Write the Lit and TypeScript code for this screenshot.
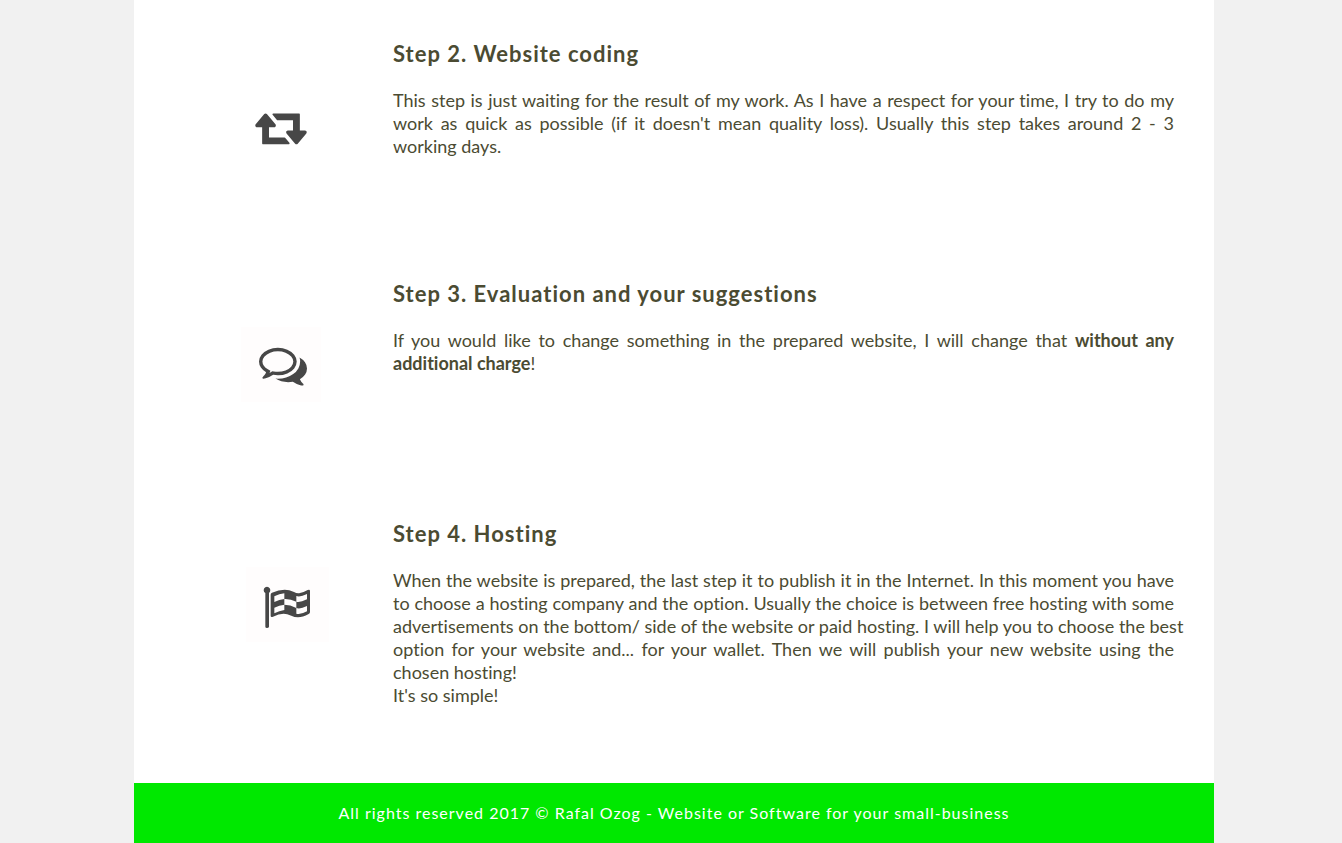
import { LitElement, html, css, svg, type TemplateResult } from "lit";
import { customElement } from "lit/decorators.js";

const retweet = svg`<svg x="14" y="23" width="52" height="48" viewBox="0 0 1920 1792"><path d="M1280 1248q0 13-9.500 22.500t-22.500 9.500h-960q-8 0-13.500-2t-9-7-5.500-8-3-11.500-1-11.500v-600h-192q-26 0-45-19t-19-45q0-24 15-41l320-384q19-22 49-22t49 22l320 384q15 17 15 41 0 26-19 45t-45 19h-192v384h576q16 0 25 11l160 192q7 10 7 21zm640-416q0 24-15 41l-320 384q-20 23-49 23t-49-23l-320-384q-15-17-15-41 0-26 19-45t45-19h192v-384h-576q-16 0-25-12l-160-192q-7-9-7-20 0-13 9.500-22.500t22.500-9.500h960q8 0 13.500 2t9 7 5.500 8 3 11.500 1 11.500v600h192q26 0 45 19t19 45z"/></svg>`;

const comments = svg`<rect class="tint" x="0" y="0" width="80" height="75"/>
<svg x="18" y="14" width="48" height="48" viewBox="0 0 1792 1792"><path d="M704 384q-153 0-286 52t-211.500 141-78.500 191q0 82 53 158t149 132l97 56-35 84q34-20 62-39l44-31 53 10q78 14 153 14 153 0 286-52t211.500-141 78.500-191-78.500-191-211.500-141-286-52zm0-128q191 0 353.500 68.500t256.500 186.500 94 257-94 257-256.500 186.500-353.500 68.500q-86 0-176-16-124 88-278 128-36 9-86 16h-3q-11 0-20.500-8t-11.500-21q-1-3-1-6.500t.5-6.500 2-6l2.500-5 3.500-5.500 4-5 4.500-5 4-4.500q5-6 23-25t26-29.500 22.500-29 25-38.500 20.500-44q-124-72-195-177t-71-224q0-139 94-257t256.500-186.500 353.500-68.500zm822 1169q10 24 20.500 44t25 38.500 22.500 29 26 29.500 23 25q1 1 4 4.500t4.500 5 4 5 3.500 5.500l2.500 5 2 6 .5 6.500-1 6.500q-3 14-13 22t-22 7q-50-7-86-16-154-40-278-128-90 16-176 16-271 0-472-132 58 4 88 4 161 0 309-45t264-129q125-92 192-212t67-254q0-77-23-152 129 71 204 178t75 230q0 120-71 224.500t-195 176.500z"/></svg>`;

const flag = svg`<rect class="tint" x="5" y="0" width="83" height="75"/>
<svg x="-6" y="-7" width="100" height="90" viewBox="0 0 300 270">
  <path d="M106 90a10 10 0 1 0-15 9v101q0 4 5 4t6-4v-101q4-3 4-9z"/>
  <path fill-rule="evenodd" d="M107 104q0-4 4-6q20-9 38-9q14 0 28 7q9 5 18 3q10-2 23-9q7-3 7 3v63q0 4-4 6q-18 10-32 10q-11 0-20-5q-13-6-23-6q-15 0-32 9q-7 3-7-3z
    M118 109v17q15-7 30-9v-17q-15 2-30 9z
    M118 143v17q15-7 30-10v-16q-15 2-30 9z
    M148 117v17q18 0 36 10v-19q-18-9-36-8z
    M184 108v17q11 3 32-7v-16q-20 10-32 6z
    M184 144v17q12 4 32-7v-16q-20 10-32 6z"/>
</svg>`;

interface Step {
  title: string;
  icon: TemplateResult<2>;
  body: TemplateResult;
}

const steps: Step[] = [
  {
    title: "Step 2. Website coding",
    icon: retweet,
    body: html`This step is just waiting for the result of my work. As I have a respect for your time, I try to do my work as quick as possible (if it doesn't mean quality loss). Usually this step takes around 2 - 3 working days.`,
  },
  {
    title: "Step 3. Evaluation and your suggestions",
    icon: comments,
    body: html`If you would like to change something in the prepared website, I will change that <strong>without any additional charge</strong>!`,
  },
  {
    title: "Step 4. Hosting",
    icon: flag,
    body: html`When the website is prepared, the last step it to publish it in the Internet. In this moment you have to choose a hosting company and the option. Usually the choice is between free hosting with some <span class="together">advertisements on the bottom/ side of the website or paid hosting. I will help you to choose the best</span> option for your website and... for your wallet. Then we will publish your new website using the chosen hosting!<br>It's so simple!`,
  },
];

@customElement("app-root")
export class AppRoot extends LitElement {
  static styles = css`
    :host {
      display: block;
      box-sizing: border-box;
      min-height: 100vh;
      padding-left: 6px;
      background: #f1f1f1;
      font-family: Lato, sans-serif;
      font-size: 18px;
      line-height: 23px;
      font-variant-ligatures: none;
      color: #4b4b32;
    }
    .page {
      max-width: 1080px;
      margin: 0 auto;
      background: #fff;
    }
    .steps {
      padding: 39px 40px 24px 107px;
    }
    .step {
      display: grid;
      grid-template-columns: 96px minmax(0, 1fr);
      column-gap: 56px;
      min-height: 240px;
    }
    .icon {
      display: block;
      width: 96px;
      height: 75px;
      margin-top: 48px;
      fill: #474747;
    }
    .tint {
      fill: #fffdfd;
    }
    .title {
      margin: 0 0 20px;
      font-size: 22px;
      line-height: 30px;
      font-weight: 700;
      letter-spacing: 1px;
    }
    .body {
      margin: 0;
      text-align: justify;
    }
    @media (min-width: 1086px) {
      .together {
        white-space: nowrap;
      }
    }
    .footer {
      padding: 18px 20px;
      background: #00e800;
      color: #fff;
      font-size: 16px;
      line-height: 24px;
      letter-spacing: 1px;
      text-align: center;
    }
  `;

  render() {
    return html`
      <div class="page">
        <main class="steps">
          ${steps.map(
            (step) => html`
              <section class="step">
                <svg class="icon" viewBox="0 0 96 75" aria-hidden="true">${step.icon}</svg>
                <div>
                  <h2 class="title">${step.title}</h2>
                  <p class="body">${step.body}</p>
                </div>
              </section>
            `,
          )}
        </main>
        <footer class="footer">All rights reserved 2017 © Rafal Ozog - Website or Software for your small-business</footer>
      </div>
    `;
  }
}
